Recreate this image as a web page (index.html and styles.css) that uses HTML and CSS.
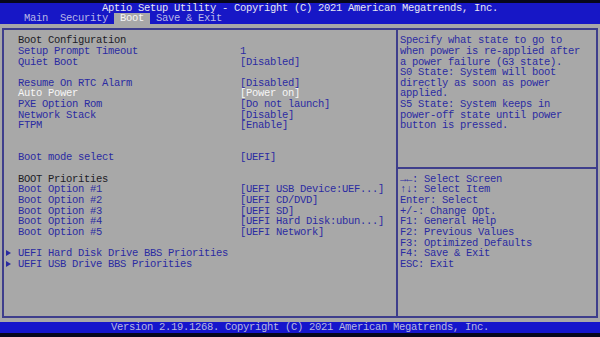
FILE: index.html
```html
<!DOCTYPE html>
<html>
<head>
  <meta charset="UTF-8">
  <link rel="stylesheet" href="styles.css">
</head>
<body>
  <div class="screen">
    <div class="topbar">
      <div class="title">Aptio Setup Utility - Copyright (C) 2021 American Megatrends, Inc.</div>
      <div class="tabs">
        <span class="tab">Main</span>
        <span class="tab">Security</span>
        <span class="tab active">Boot</span>
        <span class="tab">Save &amp; Exit</span>
      </div>
    </div>

    <div class="panel">
      <div class="frame">
        <div class="items">
          <div class="heading">Boot Configuration</div>
          <div class="item"><span class="label">Setup Prompt Timeout</span><span class="value">1</span></div>
          <div class="item"><span class="label">Quiet Boot</span><span class="value">[Disabled]</span></div>
          <div class="blank"></div>
          <div class="item"><span class="label">Resume On RTC Alarm</span><span class="value">[Disabled]</span></div>
          <div class="item selected"><span class="label">Auto Power</span><span class="value">[Power on]</span></div>
          <div class="item"><span class="label">PXE Option Rom</span><span class="value">[Do not launch]</span></div>
          <div class="item"><span class="label">Network Stack</span><span class="value">[Disable]</span></div>
          <div class="item"><span class="label">FTPM</span><span class="value">[Enable]</span></div>
          <div class="blank"></div>
          <div class="blank"></div>
          <div class="item"><span class="label">Boot mode select</span><span class="value">[UEFI]</span></div>
          <div class="blank"></div>
          <div class="heading">BOOT Priorities</div>
          <div class="item"><span class="label">Boot Option #1</span><span class="value">[UEFI USB Device:UEF...]</span></div>
          <div class="item"><span class="label">Boot Option #2</span><span class="value">[UEFI CD/DVD]</span></div>
          <div class="item"><span class="label">Boot Option #3</span><span class="value">[UEFI SD]</span></div>
          <div class="item"><span class="label">Boot Option #4</span><span class="value">[UEFI Hard Disk:ubun...]</span></div>
          <div class="item"><span class="label">Boot Option #5</span><span class="value">[UEFI Network]</span></div>
          <div class="blank"></div>
          <div class="submenu"><span class="arrow"></span>UEFI Hard Disk Drive BBS Priorities</div>
          <div class="submenu"><span class="arrow"></span>UEFI USB Drive BBS Priorities</div>
        </div>

        <div class="help">
          <div class="help-text">
            <div>Specify what state to go to</div>
            <div>when power is re-applied after</div>
            <div>a power failure (G3 state).</div>
            <div>S0 State: System will boot</div>
            <div>directly as soon as power</div>
            <div>applied.</div>
            <div>S5 State: System keeps in</div>
            <div>power-off state until power</div>
            <div>button is pressed.</div>
          </div>
          <div class="help-divider"></div>
          <div class="keys">
            <div>&rarr;&larr;: Select Screen</div>
            <div>&uarr;&darr;: Select Item</div>
            <div>Enter: Select</div>
            <div>+/-: Change Opt.</div>
            <div>F1: General Help</div>
            <div>F2: Previous Values</div>
            <div>F3: Optimized Defaults</div>
            <div>F4: Save &amp; Exit</div>
            <div>ESC: Exit</div>
          </div>
        </div>
      </div>
    </div>

    <div class="footer">Version 2.19.1268. Copyright (C) 2021 American Megatrends, Inc.</div>
  </div>
</body>
</html>
```

FILE: styles.css
```css
body {
  margin: 0;
  width: 600px;
  height: 337px;
  overflow: hidden;
  background-color: #07071c;
  font-family: "Liberation Mono", "DejaVu Sans Mono", monospace;
  font-size: 10.5px;
  letter-spacing: -0.3px;
  line-height: 10.65px;
}

.screen {
  padding-top: 2.7px;
}

/* top bar */
.topbar {
  background-color: #1717c6;
}
.title {
  height: 10.65px;
  text-align: center;
  color: #e6e6f0;
}
.tabs {
  display: flex;
  height: 10.65px;
  padding-left: 18px;
}
.tab {
  padding: 0 6px;
  color: #b8b8e6;
  white-space: pre;
}
.tab.active {
  background-color: #a8a8a8;
  color: #f6f6f6;
}

/* main panel */
.panel {
  height: 298.2px;
  box-sizing: border-box;
  padding: 4.3px 2px;
  background-color: #a8a8a8;
  display: flex;
}
.frame {
  flex: 1;
  display: flex;
  border: 2px solid #3e3e8c;
}
.items {
  width: 394px;
  box-sizing: border-box;
  padding: 5px 0 0 2px;
  border-right: 2px solid #3e3e8c;
}
.heading {
  height: 10.65px;
  padding-left: 12px;
  color: #1c1c26;
}
.item {
  display: grid;
  grid-template-columns: 234px auto;
  height: 10.65px;
  color: #2b2ba2;
  white-space: nowrap;
}
.item .label {
  padding-left: 12px;
}
.item.selected {
  color: #f6f6f6;
}
.blank {
  height: 10.65px;
}
.submenu {
  display: flex;
  align-items: center;
  height: 10.65px;
  color: #2b2ba2;
}
.arrow {
  width: 0;
  height: 0;
  margin-right: 7px;
  border-left: 5px solid #2b2ba2;
  border-top: 3.5px solid transparent;
  border-bottom: 3.5px solid transparent;
}

/* help column */
.help {
  flex: 1;
  padding-top: 5px;
  color: #2b2ba2;
}
.help-text {
  height: 127.15px;
  padding-left: 2px;
}
.help-text div, .keys div {
  height: 10.65px;
  white-space: nowrap;
}
.help-divider {
  height: 4.3px;
  margin-bottom: 5px;
  border-bottom: 2px solid #3e3e8c;
}
.keys {
  padding-left: 2px;
}

/* footer */
.footer {
  height: 10.65px;
  text-align: center;
  background-color: #1515cc;
  color: #b8b8e0;
}
```
